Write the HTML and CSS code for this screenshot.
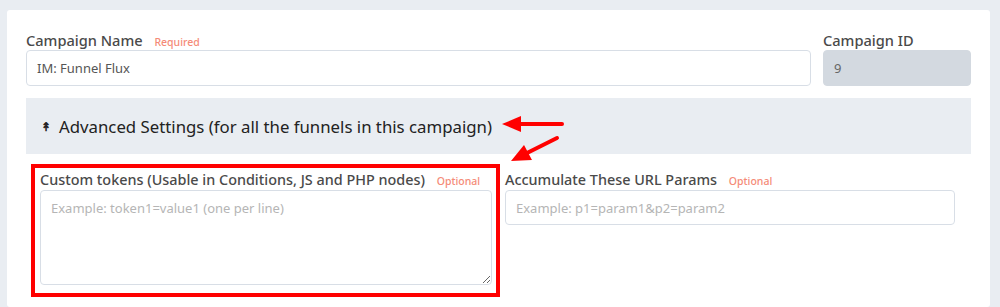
FILE: index.html
```html
<!DOCTYPE html>
<html lang="en">

<head>
    <meta charset="UTF-8">
    <meta name="viewport" content="width=device-width, initial-scale=1.0">
    <title>Campaign Settings</title>
    <link rel="stylesheet" href="styles.css">
</head>

<body>
    <div class="card">
        <!-- Name / ID row -->
        <div class="row-top">
            <div class="field field-name">
                <label>Campaign Name <span class="tag">Required</span></label>
                <input type="text" class="input" value="IM: Funnel Flux">
            </div>
            <div class="field field-id">
                <label>Campaign ID</label>
                <input type="text" class="input input-disabled" value="9" disabled>
            </div>
        </div>

        <!-- Advanced settings toggle -->
        <div class="advanced">
            <span class="advanced-icon">&#8607;</span>
            <span>Advanced Settings (for all the funnels in this campaign)</span>
        </div>

        <div class="row-bottom">
            <div class="highlight">
                <label>Custom tokens (Usable in Conditions, JS and PHP nodes) <span class="tag">Optional</span></label>
                <textarea class="input textarea" placeholder="Example: token1=value1 (one per line)"></textarea>
            </div>
            <div class="field field-params">
                <label>Accumulate These URL Params <span class="tag">Optional</span></label>
                <input type="text" class="input" placeholder="Example: p1=param1&p2=param2">
            </div>
        </div>

        <!-- annotation arrows -->
        <svg class="arrows" width="80" height="60" viewBox="495 110 80 60">
            <line x1="562" y1="124" x2="518" y2="124" stroke="#f00" stroke-width="4" stroke-linecap="round"/>
            <polygon points="502,124 521,116 521,132" fill="#f00"/>
            <line x1="557" y1="138" x2="525" y2="154" stroke="#f00" stroke-width="4" stroke-linecap="round"/>
            <polygon points="511,161 524,145 532,160" fill="#f00"/>
        </svg>
    </div>
</body>

</html>
```

FILE: styles.css
```css
* {
    margin: 0;
    padding: 0;
    box-sizing: border-box;
}

body {
    font-family: 'Noto Sans', 'Open Sans', sans-serif;
    background: #e9edf2;
    color: #4a4a4a;
    padding: 10px 10px 0 7px;
    height: 307px;
    overflow: hidden;
}

.card {
    position: relative;
    background: #fff;
    border-radius: 3px;
    padding: 20px 19px 0 19px;
    height: 297px;
    overflow: hidden;
}

label {
    display: block;
    font-size: 14.6px;
    font-weight: 500;
    color: #4a4a4a;
    height: 20px;
    line-height: 20px;
    white-space: nowrap;
}

.tag {
    font-size: 10.5px;
    color: #f58b78;
    margin-left: 8px;
    font-weight: 500;
}

.input {
    display: block;
    width: 100%;
    height: 36px;
    border: 1px solid #d8dee6;
    border-radius: 4px;
    padding: 0 10px;
    font-family: inherit;
    font-size: 13px;
    color: #555;
    background: #fff;
    outline: none;
}

.input::placeholder {
    color: #b5b5b5;
}

.input-disabled {
    background: #d3d9e0;
    border-color: #d3d9e0;
    color: #666;
}

.row-top {
    display: flex;
    gap: 12px;
}

.field-name {
    flex: 1;
}

.field-id {
    width: 148px;
}

.advanced {
    margin-top: 12px;
    height: 56px;
    background: #e9edf2;
    display: flex;
    align-items: center;
    padding-left: 15px;
    font-size: 16.8px;
    color: #222;
}

.advanced-icon {
    font-size: 12px;
    margin-right: 8px;
    font-weight: 700;
}

.row-bottom {
    display: flex;
    gap: 5px;
    margin-top: 10px;
    padding-left: 5px;
}

.highlight {
    width: 469px;
    border: 4px solid #f00;
    padding: 2px 4px 8px 5px;
    height: 133px;
}

.highlight label,
.field-params label {
    font-size: 14.4px;
}

.textarea {
    height: 95px;
    resize: vertical;
    padding: 8px 10px;
}

.field-params {
    width: 450px;
    padding-top: 6px;
}

.field-params .input {
    height: 35px;
}

.arrows {
    position: absolute;
    left: 488px;
    top: 100px;
    overflow: visible;
}
```
